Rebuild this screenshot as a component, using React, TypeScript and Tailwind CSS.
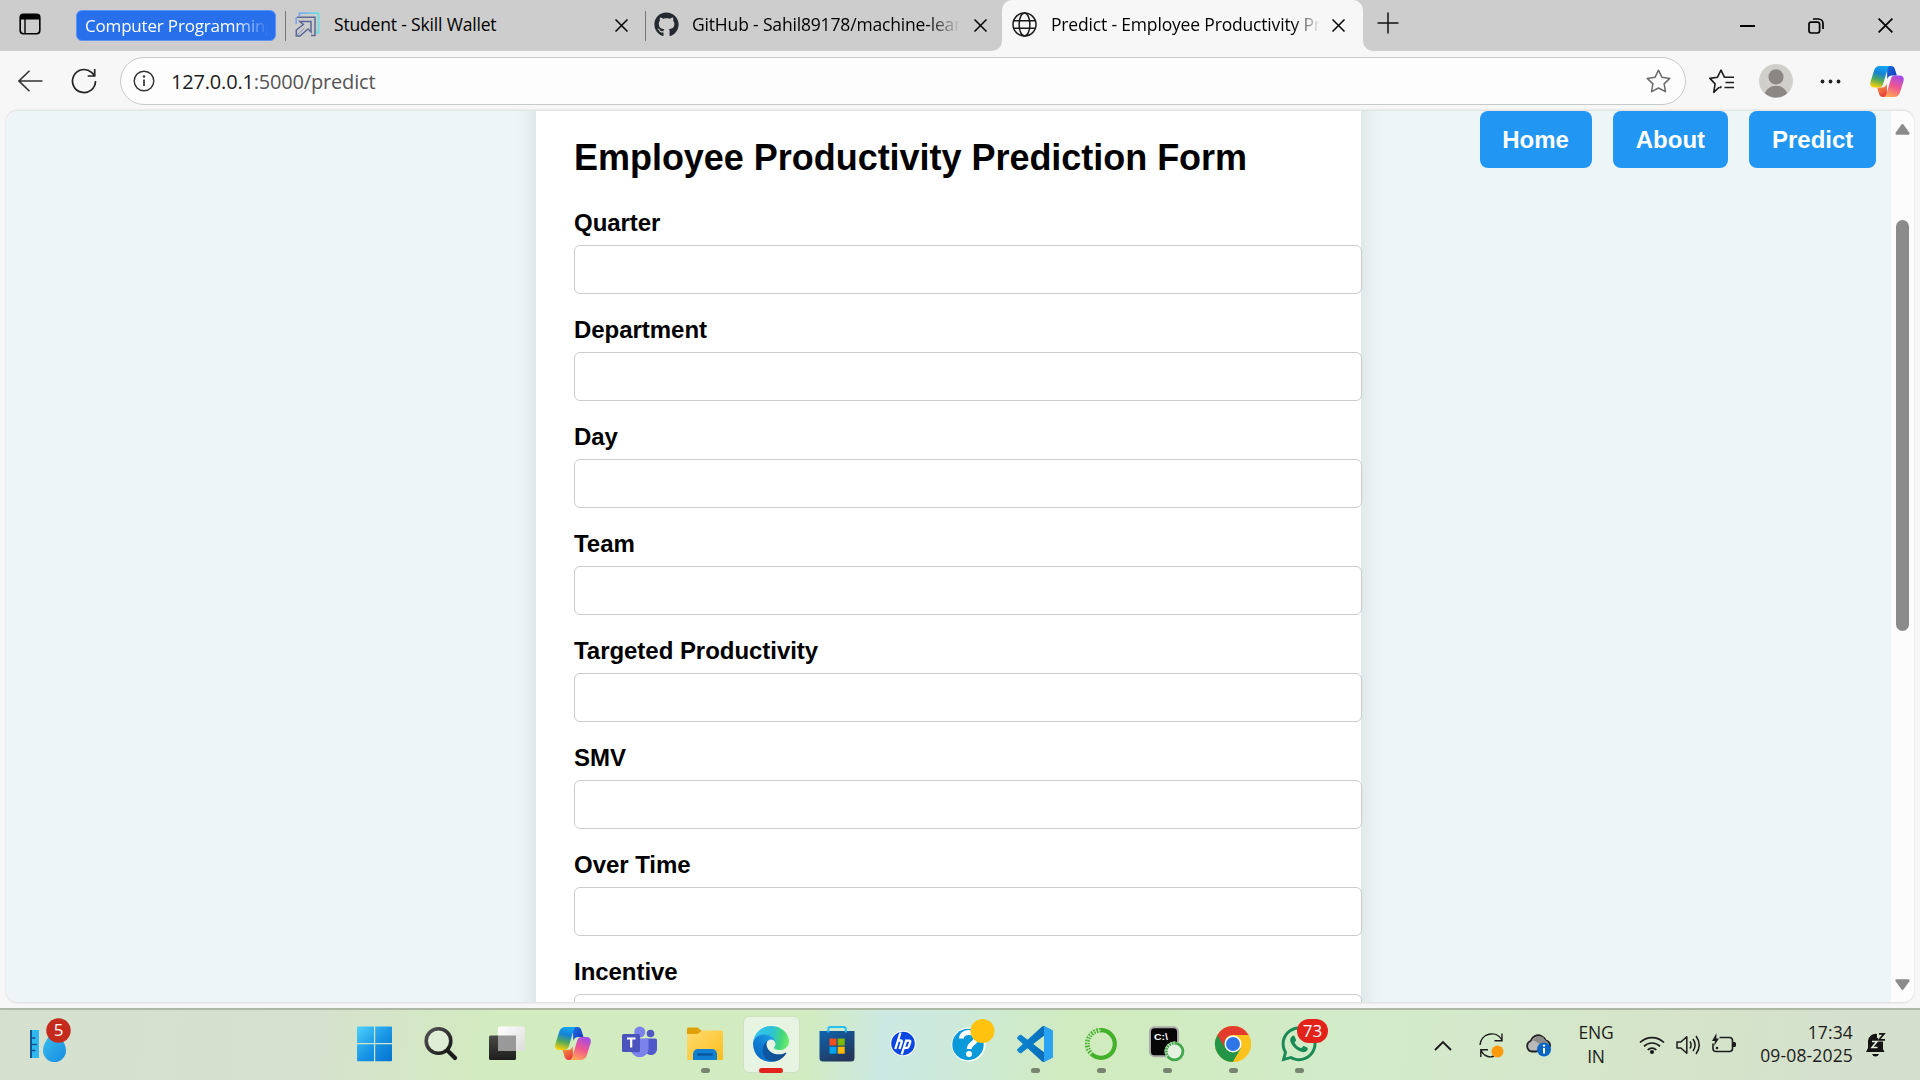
import React from "react";
import { FaGithub, FaWhatsapp } from "react-icons/fa";

const fields = [
  "Quarter",
  "Department",
  "Day",
  "Team",
  "Targeted Productivity",
  "SMV",
  "Over Time",
  "Incentive",
];

function CloseX({ className = "size-[13px]" }: { className?: string }) {
  return (
    <svg viewBox="0 0 13 13" className={className} fill="none" stroke="#000" strokeWidth="1.5">
      <path d="M.5 .5l12 12M12.5 .5l-12 12" />
    </svg>
  );
}

function WorkspaceIcon() {
  return (
    <svg width="22" height="22" viewBox="0 0 22 22">
      <rect x="1.2" y="1.2" width="19.6" height="19.6" rx="3.2" fill="none" stroke="#000" strokeWidth="1.6" />
      <path d="M1 6.5V4a3 3 0 0 1 3-3h14a3 3 0 0 1 3 3v2.5z" />
      <path d="M6 6v15" stroke="#000" strokeWidth="1.4" />
    </svg>
  );
}

function SkillIcon() {
  return (
    <svg width="25" height="25" viewBox="0 0 25 25" fill="none">
      <defs>
        <linearGradient id="sk" x1="0" y1="0" x2="1" y2="0">
          <stop offset="0" stopColor="#7fa6f0" />
          <stop offset="1" stopColor="#66dfe2" />
        </linearGradient>
      </defs>
      <path d="M4.500 4V1.200H23.500V20.500H20.500" stroke="url(#sk)" strokeWidth="1.800" />
      <path d="M1.200 12V5" stroke="#7fa6f0" strokeWidth="1.600" />
      <path d="M2 5.200H20V23.500H16" stroke="#5f6a90" strokeWidth="1.500" />
      <path d="M5 9.500h11V20l-3-3-4 3.500L5 24H1.300v-6l7-5.500z" stroke="#5a6592" strokeWidth="1.500" />
      <path d="M1.500 23.500l8-7.500" stroke="#7b8cc0" strokeWidth="1" />
    </svg>
  );
}

function GlobeIcon() {
  return (
    <svg width="25" height="25" viewBox="0 0 25 25" fill="none" stroke="#1b1b1b" strokeWidth="1.500">
      <circle cx="12.500" cy="12.500" r="11.500" />
      <ellipse cx="12.500" cy="12.500" rx="5.400" ry="11.500" />
      <path d="M2 8.700h21M2 16.300h21" />
    </svg>
  );
}

function CopilotIcon({ id, className }: { id: string; className: string }) {
  return (
    <svg viewBox="0 0 36 33" className={className}>
      <defs>
        <linearGradient id={id + "a"} x1="0.600" y1="0" x2="0.350" y2="1">
          <stop offset="0" stopColor="#12a5f0" />
          <stop offset=".35" stopColor="#1583d6" />
          <stop offset=".65" stopColor="#4fa95c" />
          <stop offset="1" stopColor="#f5cf0a" />
        </linearGradient>
        <linearGradient id={id + "b"} x1="0.700" y1="0" x2="0.300" y2="1">
          <stop offset="0" stopColor="#a34be8" />
          <stop offset=".5" stopColor="#f0568f" />
          <stop offset="1" stopColor="#ffa955" />
        </linearGradient>
        <linearGradient id={id + "c"} x1="0" y1="0" x2="1" y2="1">
          <stop offset="0" stopColor="#1c6fe0" />
          <stop offset="1" stopColor="#1232b8" />
        </linearGradient>
        <linearGradient id={id + "d"} x1="0" y1="0" x2="0.500" y2="1">
          <stop offset="0" stopColor="#f9a63a" />
          <stop offset="1" stopColor="#e8403f" />
        </linearGradient>
      </defs>
      <path d="M18 0h4.500c2 0 3.200 1.200 3.800 3l2.200 7h-5c-3 0-4.500 1.500-5.300 4z" fill={`url(#${id}c)`} />
      <path d="M18 33h-4.500c-2 0-3.200-1.200-3.800-3l-2.200-7h5c3 0 4.500-1.500 5.300-4z" fill={`url(#${id}d)`} />
      <path d="M10.500 0H22c-2 0-2.800 1.500-3.600 4l-4.600 15.500c-.8 2.400-2.300 3.500-4.600 3.500H4.500C1 23-.5 20.500.400 17L4.300 4.500C5.200 1.600 7.500 0 10.500 0z" fill={`url(#${id}a)`} />
      <path d="M25.500 33H14c2 0 2.800-1.500 3.600-4l4.600-15.500c.8-2.400 2.300-3.500 4.600-3.500h4.700c3.500 0 5 2.500 4.100 6l-3.900 12.500c-.9 2.900-3.200 4.500-6.200 4.500z" fill={`url(#${id}b)`} />
    </svg>
  );
}

function TabStrip() {
  return (
    <div className="flex h-[51px] w-full items-start bg-[#cdcdcd] text-[17.5px] leading-[24px] text-black">
      <div className="ml-[19px] mt-[13px] w-[22px]"><WorkspaceIcon /></div>
      <div className="ml-[35px] mt-[10px] flex h-[31px] w-[200px] items-center rounded-[6px] border border-[#5b95f3] bg-[#2870eb] pl-[8px]">
        <span className="w-[183px] overflow-hidden whitespace-nowrap text-[17px] tracking-[-0.18px] text-white [mask-image:linear-gradient(90deg,#000_82%,transparent)]">
          Computer Programming
        </span>
      </div>
      <div className="ml-[9px] mt-[11px] h-[30px] w-px bg-[#777]" />
      <div className="ml-[9px] flex h-[49px] w-[350px] items-center">
        <SkillIcon />
        <span className="-mt-[2px] ml-[14px] w-[281px] whitespace-nowrap tracking-[-0.170px]">Student - Skill Wallet</span>
        <CloseX className="mt-px size-[13px]" />
      </div>
      <div className="mt-[11px] h-[30px] w-px bg-[#777]" />
      <div className="ml-[8px] flex h-[49px] w-[348px] items-center">
        <FaGithub size={25} color="#24292f" />
        <span className="-mt-[2px] ml-[13px] w-[268px] overflow-hidden whitespace-nowrap tracking-[-0.170px] [mask-image:linear-gradient(90deg,#000_88%,transparent)]">
          GitHub - Sahil89178/machine-learning
        </span>
        <CloseX className="ml-[14px] mt-px size-[13px]" />
      </div>
      <div className="-ml-[10px] flex h-[51px] w-[10px] bg-[#f7f7f7]"><div className="h-full w-full rounded-br-[10px] bg-[#cdcdcd]" /></div>
      <div className="flex h-[51px] w-[361px] items-start rounded-t-[10px] bg-[#f7f7f7]">
        <div className="flex h-[49px] items-center pl-[10px]">
          <GlobeIcon />
          <span className="-mt-[2px] ml-[14px] w-[269px] overflow-hidden whitespace-nowrap tracking-[-0.170px] [mask-image:linear-gradient(90deg,#000_90%,transparent)]">
            Predict - Employee Productivity Prediction
          </span>
          <CloseX className="ml-[12px] mt-px size-[13px]" />
        </div>
      </div>
      <div className="flex h-[51px] w-[10px] bg-[#f7f7f7]"><div className="h-full w-full rounded-bl-[10px] bg-[#cdcdcd]" /></div>
      <svg width="22" height="22" viewBox="0 0 22 22" className="ml-[4px] mt-[12px]" stroke="#111" strokeWidth="1.500"><path d="M11 .5v21M.5 11h21" /></svg>
      <div className="ml-auto mr-[27px] flex h-[51px] items-center">
        <div className="h-[2px] w-[15px] bg-black" />
        <svg width="16" height="16" viewBox="0 0 16 16" fill="none" stroke="#000" strokeWidth="1.700" className="ml-[53px]">
          <rect x="1" y="4.200" width="10.600" height="10.800" rx="2.200" />
          <path d="M5 1h5.500A4.500 4.500 0 0 1 15 5.500V11" />
        </svg>
        <CloseX className="ml-[54px] size-[15px]" />
      </div>
    </div>
  );
}

function Toolbar() {
  return (
    <div className="flex h-[59px] w-full items-center bg-[#f7f7f7]">
      <svg width="25" height="22" viewBox="0 0 25 22" className="ml-[18px]" fill="none" stroke="#333" strokeWidth="1.600"><path d="M24.500 11H1M11.500 .7L1 11l10.500 10.300" /></svg>
      <svg width="26" height="26" viewBox="0 0 26 26" className="ml-[28px]" fill="none" stroke="#222" strokeWidth="1.700">
        <path d="M24.500 13A11.500 11.500 0 1 1 20.500 4.300l3 3M23.700 1v7h-7" />
      </svg>
      <div className="ml-[23px] flex h-[48px] w-[1566px] items-center rounded-full border border-[#c9c9c9] bg-[#fdfdfd]">
        <svg width="22" height="22" viewBox="0 0 22 22" className="ml-[12px]" fill="none" stroke="#333" strokeWidth="1.400">
          <circle cx="11" cy="11" r="9.800" />
          <path d="M11 9.500v6.500" strokeWidth="1.700" />
          <circle cx="11" cy="6.500" r="1.200" fill="#333" stroke="none" />
        </svg>
        <span className="mt-[2px] ml-[16px] whitespace-nowrap text-[20px] leading-[28px] tracking-[-0.18px] text-[#1c1c1c]">
          127.0.0.1<span className="text-[#555]">:5000/predict</span>
        </span>
        <svg width="25" height="25" viewBox="0 0 25 25" className="mt-px ml-auto mr-[14px]" fill="none" stroke="#6b6b6b" strokeWidth="1.500" strokeLinejoin="round">
          <path d="M12.500 1.200l3.500 7.100 7.800 1.100-5.700 5.500 1.400 7.800-7-3.700-7 3.700 1.400-7.800-5.700-5.500L9 8.300z" />
        </svg>
      </div>
      <svg width="26" height="25" viewBox="0 0 26 25" className="mt-px ml-[23px]" fill="none" stroke="#1d1d1d" strokeWidth="1.600" strokeLinejoin="round">
        <path d="M10 18.300l-5.300 5 1.400-8.400L.900 9.400l7.500-1.100L12 1.200l3.500 7.100H25M16.500 13.500H25M15.500 18.500H25" />
        <path d="M10.500 19l2-1.500" />
      </svg>
      <svg width="34" height="34" viewBox="0 0 34 34" className="mt-px ml-[24px]">
        <defs><clipPath id="av"><circle cx="17" cy="17" r="16.500" /></clipPath></defs>
        <circle cx="17" cy="17" r="17" fill="#d1cfcb" />
        <g clipPath="url(#av)" fill="#8a8784"><circle cx="17" cy="12.800" r="7.600" /><path d="M4.500 34c1-7.500 6-12.300 12.500-12.300S28.500 26.500 29.500 34z" /></g>
      </svg>
      <svg width="21" height="5" viewBox="0 0 21 5" className="mt-px ml-[27px]" fill="#222"><circle cx="2.500" cy="2.500" r="1.900" /><circle cx="10.500" cy="2.500" r="1.900" /><circle cx="18.500" cy="2.500" r="1.900" /></svg>
      <CopilotIcon id="tc" className="mt-px ml-[29px] h-[31px] w-[34px]" />
    </div>
  );
}

function NavButton({ children }: { children: React.ReactNode }) {
  return (
    <a className="flex h-[57px] items-center rounded-[8px] bg-[#2196f3] px-[22.700px] text-[24px] font-bold text-white">{children}</a>
  );
}

function Page() {
  return (
    <div className="mx-[6px] flex h-[893px] overflow-hidden rounded-[12px] border-t border-b border-[#e4e4e4] bg-[#fcfcfc] font-['Liberation_Sans',Arial,sans-serif] shadow-[0_0_2px_rgba(0,0,0,0.15)]">
      <main className="grid h-full flex-1 grid-cols-[530px_825px_530px] overflow-hidden bg-[#edf5f7]">
        <div />
        <form className="-mt-[40px] h-[980px] bg-white pt-[66px] pl-[38px] shadow-[0_0_22px_rgba(0,0,0,0.11)]">
          <h2 className="mb-[30px] text-[36px] leading-[42px] font-bold tracking-[-0.03px] text-black">Employee Productivity Prediction Form</h2>
          {fields.map((f) => (
            <div key={f} className="mb-[22px]">
              <label className="block text-[24px] leading-[27px] font-bold tracking-[-0.04px] text-black">{f}</label>
              <input className="mt-[9px] block h-[49px] w-[788px] rounded-[6px] border border-[#ccc] bg-white" />
            </div>
          ))}
        </form>
        <nav className="flex items-start justify-end gap-[21.500px] pr-[15px]">
          <NavButton>Home</NavButton>
          <NavButton>About</NavButton>
          <NavButton>Predict</NavButton>
        </nav>
      </main>
      <div className="flex w-[23px] flex-col items-center bg-[#fcfcfc] pt-[13px] pb-[12px]">
        <svg width="15" height="11" viewBox="0 0 15 11" fill="#8b8b8b"><path d="M6.300 .8q1.200-1.400 2.400 0l5.700 8q.6 1.700-1 1.900H1.600q-1.600-.2-1-1.900z" /></svg>
        <div className="mt-[85px] h-[411px] w-[13px] rounded-full bg-[#8b8b8b]" />
        <svg width="15" height="11" viewBox="0 0 15 11" fill="#8b8b8b" className="mt-auto"><path d="M6.300 10.200q1.200 1.400 2.400 0l5.700-8q.6-1.700-1-1.900H1.600q-1.600 .2-1 1.900z" /></svg>
      </div>
    </div>
  );
}

function Cell({ children, state }: { children: React.ReactNode; state?: "run" | "active" }) {
  return (
    <div className="flex h-[70px] w-[66px] flex-col items-center pt-[6px]">
      <div
        className={
          state === "active"
            ? "flex h-[57px] w-[57px] items-start justify-center rounded-[6px] border border-[#cfe0c4] bg-[#e8f4e2] pt-[9px]"
            : "flex h-[57px] w-[57px] items-start justify-center pt-[10px]"
        }
      >
        {children}
      </div>
      {state === "run" && <div className="-mt-[5px] h-[5px] w-[9px] rounded-full bg-[#77846f]" />}
      {state === "active" && <div className="-mt-[5px] h-[5px] w-[24px] rounded-full bg-[#e3221b]" />}
    </div>
  );
}

const S = { width: 36, height: 36, viewBox: "0 0 36 36", className: "shrink-0 overflow-visible" };

function WindowsIcon() {
  return (
    <svg {...S}>
      <defs><linearGradient id="wn" x1="0" y1="0" x2="36" y2="36" gradientUnits="userSpaceOnUse"><stop offset="0" stopColor="#4fd3fb" /><stop offset=".5" stopColor="#1a97e6" /><stop offset="1" stopColor="#0270ce" /></linearGradient></defs>
      <path fill="url(#wn)" d="M1 .5h16v16.500H0V1.500A1 1 0 0 1 1 .5zM18.200 .5h15.800A1 1 0 0 1 35 1.500v15.500H18.200zM0 18.200H17V35.300H1a1 1 0 0 1-1-1zM18.200 18.200H35v16.100a1 1 0 0 1-1 1H18.200z" />
    </svg>
  );
}

function SearchIcon() {
  return (
    <svg {...S}>
      <defs><linearGradient id="sr" x1="0" y1="0" x2="1" y2="1"><stop offset="0" stopColor="#555" /><stop offset="1" stopColor="#151515" /></linearGradient></defs>
      <circle cx="15.500" cy="15" r="12.300" fill="#e8f0e2" fillOpacity=".6" stroke="url(#sr)" strokeWidth="3.600" />
      <path d="M24.500 24.500l7.500 7.500" stroke="#1c1c1c" strokeWidth="4.200" strokeLinecap="round" />
    </svg>
  );
}

function TaskViewIcon() {
  return (
    <svg {...S}>
      <defs>
        <linearGradient id="tva" x1="0" y1="0" x2="0" y2="1"><stop offset="0" stopColor="#4a4a46" /><stop offset="1" stopColor="#1d1d1d" /></linearGradient>
        <linearGradient id="tvb" x1="0" y1="0" x2="1" y2="1"><stop offset="0" stopColor="#fff" /><stop offset="1" stopColor="#dcdcdc" /></linearGradient>
      </defs>
      <rect x="0" y="9.500" width="27" height="24.500" rx="1.500" fill="url(#tva)" />
      <rect x="9" y=".5" width="27" height="24.500" rx="1.500" fill="url(#tvb)" />
      <path d="M9 9.500h18V25H10.500A1.500 1.500 0 0 1 9 23.500z" fill="#999" />
    </svg>
  );
}

function TeamsIcon() {
  return (
    <svg {...S}>
      <circle cx="29.500" cy="7.500" r="3.800" fill="#4f57c0" />
      <path d="M24 12.500h10.500a1.500 1.500 0 0 1 1.500 1.500v8a6 6 0 0 1-12 2z" fill="#5059c9" />
      <circle cx="18.800" cy="6" r="5.500" fill="#7b83eb" />
      <path d="M11 12.500h15a1.500 1.500 0 0 1 1.500 1.500v9.500a8.800 8.800 0 0 1-17.500 0z" fill="#7b83eb" />
      <path d="M11 12.500h8v14h-8.500z" fill="#5059c9" opacity=".5" />
      <rect x="1" y="8" width="18" height="18" rx="1.600" fill="#4b53bc" />
      <path d="M6 12.500h8.500M10.200 12.500v9" stroke="#fff" strokeWidth="2.200" />
    </svg>
  );
}

function FolderIcon() {
  return (
    <svg {...S}>
      <defs><linearGradient id="fo" x1="0" y1="0" x2="1" y2="1"><stop offset="0" stopColor="#ffdc70" /><stop offset="1" stopColor="#fbbd1c" /></linearGradient></defs>
      <path d="M0 3a1.500 1.500 0 0 1 1.500-1.500h9L15 5v5H0z" fill="#e0a008" />
      <path d="M0 8h10.500L15 4.500h19.500A1.500 1.500 0 0 1 36 6v26.500a1.500 1.500 0 0 1-1.500 1.500h-33A1.500 1.500 0 0 1 0 32.500z" fill="url(#fo)" />
      <path d="M6 34v-6a5 5 0 0 1 5-5h14a5 5 0 0 1 5 5v6z" fill="#0f7fd2" />
      <path d="M11 28.500h14" stroke="#0a4f92" strokeWidth="1.800" strokeLinecap="round" />
    </svg>
  );
}

function EdgeIcon() {
  return (
    <svg {...S} viewBox="0 0 256 256">
      <defs>
        <linearGradient id="e1" x1="63" y1="177" x2="241" y2="177" gradientUnits="userSpaceOnUse"><stop offset="0" stopColor="#0c59a4" /><stop offset="1" stopColor="#114a8b" /></linearGradient>
        <linearGradient id="e2" x1="157" y1="100" x2="46" y2="221" gradientUnits="userSpaceOnUse"><stop offset="0" stopColor="#1b9de2" /><stop offset=".5" stopColor="#0f80d7" /><stop offset="1" stopColor="#0a6cc4" /></linearGradient>
        <linearGradient id="e3" x1="10" y1="60" x2="245" y2="110" gradientUnits="userSpaceOnUse"><stop offset="0" stopColor="#35c1f1" /><stop offset=".5" stopColor="#2cc3d5" /><stop offset=".8" stopColor="#44d67b" /><stop offset="1" stopColor="#66eb6e" /></linearGradient>
      </defs>
      <path fill="url(#e1)" d="M231 190.500c-3.400 1.800-6.900 3.400-10.500 4.700a101.700 101.700 0 0 1-35.900 6.400c-47.300 0-88.500-32.500-88.500-74.300a31.500 31.500 0 0 1 16.400-27.300c-42.800 1.800-53.800 46.400-53.800 72.500 0 74 68.100 81.400 82.800 81.400 7.900 0 19.800-2.300 27-4.600l1.300-.4a128.300 128.300 0 0 0 66.600-52.800 4 4 0 0 0-5.400-5.600z" />
      <path fill="url(#e2)" d="M105.700 241.400a79.200 79.200 0 0 1-22.700-21.300 80.700 80.700 0 0 1 29.500-120c3.200-1.500 8.500-4.100 15.600-4a32.400 32.400 0 0 1 25.700 13 31.900 31.900 0 0 1 6.300 18.700c0-.2 24.500-79.600-80-79.600-43.900 0-80 41.600-80 78.200a130.200 130.200 0 0 0 12.100 56 128 128 0 0 0 156.400 67 75.500 75.500 0 0 1-62.800-8z" />
      <path fill="url(#e3)" d="M152.300 148.900c-.9 1-3.400 2.500-3.400 5.600 0 2.600 1.700 5.200 4.800 7.300 14.300 10 41.400 8.600 41.500 8.600a59.600 59.600 0 0 0 30.300-8.300 61.400 61.400 0 0 0 30.400-52.900c.3-22.400-8-37.300-11.300-43.900C223.300 23.700 177.700 0 128 0A128 128 0 0 0 0 126.200c.5-36.500 36.800-66 80-66 3.500 0 23.500.3 42 10a72.600 72.600 0 0 1 30.900 29.300c6.100 10.600 7.200 24.100 7.200 29.500s-2.700 13.300-7.800 19.900z" />
    </svg>
  );
}

function StoreIcon() {
  return (
    <svg {...S}>
      <defs><linearGradient id="st" x1="0" y1="0" x2="0.600" y2="1"><stop offset="0" stopColor="#0f64b0" /><stop offset="1" stopColor="#23375c" /></linearGradient></defs>
      <path d="M9.300 6.500V3a2 2 0 0 1 2-2h13.500a2 2 0 0 1 2 2v3.500" fill="none" stroke="#27c0f2" strokeWidth="2" />
      <path d="M.5 5h35v27a3.500 3.500 0 0 1-3.500 3.500H4A3.500 3.500 0 0 1 .5 32z" fill="url(#st)" />
      <path d="M9.300 4.500v2M26.800 4.500v2" stroke="#27c0f2" strokeWidth="2" />
      <path d="M10.500 12.500h7v7h-7z" fill="#f25022" /><path d="M18.700 12.500h7v7h-7z" fill="#7fba00" />
      <path d="M10.500 20.700h7v7h-7z" fill="#00a4ef" /><path d="M18.700 20.700h7v7h-7z" fill="#ffb900" />
    </svg>
  );
}

function HpIcon() {
  return (
    <svg {...S}>
      <circle cx="18" cy="17.500" r="12.800" fill="#fff" />
      <circle cx="18" cy="17.500" r="11.800" fill="#0a47e0" />
      <g fill="none" stroke="#fff" strokeWidth="2.300">
        <path d="M15.500 6.500l-5.200 16.500M13 14.500h2.700q1.500 0 1 1.600L14.500 23" />
        <path d="M21.500 13.500L16.700 28.500M20.700 14.600h3.500q1.500 0 1 1.600l-1.500 4.400q-.5 1.300-1.900 1.300h-2.600" />
      </g>
    </svg>
  );
}

function HelpIcon() {
  return (
    <svg {...S}>
      <circle cx="17.500" cy="18.500" r="17" fill="#fff" />
      <circle cx="17" cy="18.500" r="15.700" fill="#0a9ada" />
      <path d="M10.500 12.500c0-8 14.500-8 14.500 0 0 5-6.800 5-6.800 10.500" fill="none" stroke="#fff" strokeWidth="4.800" />
      <circle cx="18" cy="28" r="3" fill="#fff" />
      <circle cx="31.500" cy="5" r="12" fill="#ffc20e" />
    </svg>
  );
}

function VsCodeIcon() {
  return (
    <svg {...S} viewBox="0 0 24 24">
      <defs><linearGradient id="vs" x1="0" y1="0" x2="1" y2="0"><stop offset="0" stopColor="#0b86d2" /><stop offset="1" stopColor="#0966ae" /></linearGradient></defs>
      <path fill="url(#vs)" d="M23.150 2.587L18.210.21a1.494 1.494 0 0 0-1.705.29l-9.460 8.630-4.120-3.128a.999.999 0 0 0-1.276.057L.327 7.261A1 1 0 0 0 .326 8.740L3.899 12 .326 15.260a1 1 0 0 0 .001 1.479L1.650 17.940a.999.999 0 0 0 1.276.057l4.120-3.128 9.460 8.630a1.492 1.492 0 0 0 1.704.290l4.942-2.377A1.500 1.500 0 0 0 24 20.060V3.939a1.500 1.500 0 0 0-.850-1.352zm-5.146 14.861L10.826 12l7.178-5.448v10.896z" />
      <path fill="#2aa3f2" d="M18 .150l.210.060 4.940 2.377A1.500 1.500 0 0 1 24 3.939V20.060a1.500 1.500 0 0 1-.850 1.352l-4.940 2.377L18 23.850z" />
    </svg>
  );
}

function AnacondaIcon() {
  return (
    <svg {...S}>
      <circle cx="18" cy="18" r="13.800" fill="none" stroke="#43b02a" strokeWidth="4.200" />
      <path d="M18 4.200A13.800 13.800 0 0 0 8.300 27.800" fill="none" stroke="#d3ebc3" strokeWidth="4.600" />
      <path d="M18 4.200A13.800 13.800 0 0 0 8.300 27.800" fill="none" stroke="#43b02a" strokeWidth="4.400" strokeDasharray="1.600 1.300" />
      <path d="M18 4.200A13.800 13.800 0 0 0 8.300 27.800" fill="none" stroke="#b9e2a6" strokeWidth="1" strokeDasharray="3 2" />
    </svg>
  );
}

function CmdIcon() {
  return (
    <svg {...S}>
      <rect x="1" y="1.200" width="28" height="29" rx="4.500" fill="#070707" stroke="#a9aaa9" strokeWidth="2" />
      <text x="5" y="13.500" fill="#fff" fontSize="9.500" fontWeight="700" fontFamily="Liberation Sans, sans-serif" textLength="14" lengthAdjust="spacingAndGlyphs">C:\</text>
      <circle cx="25.500" cy="25.500" r="10" fill="#d9edd0" />
      <circle cx="25.500" cy="25.500" r="8.400" fill="#e6f2e0" stroke="#43a84c" strokeWidth="2.800" />
      <path d="M25.500 17.100a8.400 8.400 0 0 0-6 14.300" fill="none" stroke="#d9edd0" strokeWidth="3" strokeDasharray="1 1.800" />
    </svg>
  );
}

function ChromeIcon() {
  return (
    <svg {...S}>
      <circle cx="18" cy="18" r="18" fill="#fcc31e" />
      <path d="M2.400 9A18 18 0 0 0 18 36l7.800-13.500L18 18z" fill="#249447" />
      <path d="M25.800 22.500L18 36A18 18 0 0 0 33.600 9H18z" fill="#fcc31e" />
      <path d="M2.400 9A18 18 0 0 1 33.600 9H18a9 9 0 0 0-7.800 13.500z" fill="#e33b2e" />
      <circle cx="18" cy="18" r="8.500" fill="#fff" />
      <circle cx="18" cy="18" r="7" fill="#2f76e8" />
    </svg>
  );
}

function WeatherIcon() {
  return (
    <svg width="44" height="48" viewBox="0 0 44 48">
      <defs><linearGradient id="wd" x1="0" y1="0" x2="0.800" y2="1"><stop offset="0" stopColor="#3cc6f2" /><stop offset="1" stopColor="#1990e2" /></linearGradient></defs>
      <path d="M2 12h9v28H2z" fill="#2fb7ef" /><path d="M2 12h2v28H2z" fill="#17558f" />
      <path d="M4 20h3.500M4 26.500h5M4 32.500h3.500" stroke="#17558f" strokeWidth="1.600" />
      <path d="M26.500 10c4 7 11.500 14.500 11.500 22.500a11.500 11.500 0 0 1-23 0C15 24.500 22.500 17 26.500 10z" fill="url(#wd)" />
      <circle cx="30.500" cy="12.500" r="12.200" fill="#c42b1c" />
      <text x="30.500" y="18.400" textAnchor="middle" fill="#fff" fontSize="17" fontFamily="Open Sans, sans-serif">5</text>
    </svg>
  );
}

function Tray() {
  return (
    <>
      <svg width="18" height="11" viewBox="0 0 18 11" className="ml-[102px] shrink-0" fill="none" stroke="#1c1c1c" strokeWidth="1.900"><path d="M1 10l8-8 8 8" /></svg>
      <svg width="25" height="26" viewBox="0 0 25 26" className="ml-[27px] shrink-0" fill="none" stroke="#1c1c1c" strokeWidth="1.400">
        <path d="M1 13C1.500 1.500 17-2.500 23 8M23 1.500V8.800h-7.500M9 17.800H1.800V25M2 18.500c3 6 9 7.500 13 5.500" />
        <circle cx="18.500" cy="19.500" r="6" fill="#fd9a0c" stroke="none" />
      </svg>
      <svg width="26" height="24" viewBox="0 0 26 24" className="ml-[22px] shrink-0">
        <path d="M7 18.500H6A5.500 5.500 0 0 1 4.500 8C6 3.500 11 1 15.500 3c2 .8 3.600 2.500 4.300 4.500C23 8 24.500 11 24 13.500L10 18.500z" fill="#bababa" stroke="#222" strokeWidth="1.800" />
        <path d="M5.500 7.800C8.500 7 10 9 14 11l8 3V9l-3-2-2-3-5-1z" fill="#8b8b8b" />
        <circle cx="18" cy="16.500" r="7" fill="#0a66c2" />
        <path d="M18 15v5.500" stroke="#fff" strokeWidth="2" /><circle cx="18" cy="12.600" r="1.200" fill="#fff" />
      </svg>
      <div className="-mt-px ml-[18px] w-[52px] shrink-0 text-center text-[17.5px] leading-[23.500px] tracking-[-0.2px] text-[#1c1c1c]">
        ENG<br />IN
      </div>
      <svg width="26" height="20" viewBox="0 0 26 20" className="ml-[17px] shrink-0" fill="none" stroke="#1c1c1c" strokeWidth="1.700">
        <path d="M1 7.500a17 17 0 0 1 24 0M5 11.300a11.300 11.300 0 0 1 16 0M8.700 15a6 6 0 0 1 8.600 0" />
        <circle cx="13" cy="17" r="2.100" fill="#1c1c1c" stroke="none" />
      </svg>
      <svg width="25" height="22" viewBox="0 0 25 22" className="ml-[11px] shrink-0" fill="none" stroke="#1c1c1c" strokeWidth="1.500">
        <path d="M1 8v6h3.800l6 5.300V2.700L4.800 8z" strokeLinejoin="round" />
        <path d="M14 7.500q2.200 3.500 0 7M17 5q4.200 6 0 12M20 2q6.500 9 0 18" />
      </svg>
      <svg width="26" height="22" viewBox="0 0 26 22" className="-mt-[3px] ml-[10px] shrink-0" fill="none" stroke="#1c1c1c" strokeWidth="1.600">
        <path d="M8.500 4.500h10A3 3 0 0 1 21.500 7.500v8a3 3 0 0 1-3 3H5a3 3 0 0 1-3-3V10.500" />
        <path d="M22 9h1.500a1.500 1.500 0 0 1 1.500 1.500v2a1.500 1.500 0 0 1-1.500 1.500H22z" fill="#1c1c1c" stroke="none" />
        <path d="M5.500 0L1 8h3l-1 5 5-7.500H5.300z" fill="#1c1c1c" stroke="none" />
        <circle cx="6" cy="15" r="1.300" fill="#1c1c1c" stroke="none" />
      </svg>
      <div className="-mt-[2px] ml-[10px] w-[106px] shrink-0 text-right text-[17.5px] leading-[23.500px] tracking-[0.15px] whitespace-nowrap text-[#1c1c1c]">
        17:34<br />09-08-2025
      </div>
      <svg width="22" height="25" viewBox="0 0 22 25" className="-mt-[2px] ml-[12px] shrink-0">
        <path d="M3 9a7.500 7.500 0 0 1 9-7v4h6v11l1.500 3H1l2-4z" fill="#141414" />
        <path d="M7 22h7q-1 2.500-3.500 2.500T7 22z" fill="#141414" />
        <path d="M13 0h8v9.500h-8z" fill="#d5e1cc" />
        <path d="M14 1.800h5l-5 6H20" fill="none" stroke="#141414" strokeWidth="1.700" />
        <path d="M7 9.500h5l-5 6h5.500" fill="none" stroke="#e6efe0" strokeWidth="1.600" />
      </svg>
    </>
  );
}

function Taskbar() {
  return (
    <div className="flex h-[72px] w-full items-center border-t-2 border-[#adb8a5] bg-[linear-gradient(97deg,#d5e0ce_0%,#d6e2cd_17%,#d2ebbf_26%,#d2ebc0_42%,#cbe9e2_46%,#cce9dc_49%,#d0ebbd_56%,#d3ebcb_72%,#d5e5c9_84%,#d4dfce_100%)]">
      <div className="ml-[28px] -mt-[6px] w-[44px]"><WeatherIcon /></div>
      <div className="ml-[270px] flex">
        <Cell><WindowsIcon /></Cell>
        <Cell><SearchIcon /></Cell>
        <Cell><TaskViewIcon /></Cell>
        <Cell><CopilotIcon id="bc" className="mt-px h-[33px] w-[36px]" /></Cell>
        <Cell><TeamsIcon /></Cell>
        <Cell state="run"><FolderIcon /></Cell>
        <Cell state="active"><EdgeIcon /></Cell>
        <Cell><StoreIcon /></Cell>
        <Cell><HpIcon /></Cell>
        <Cell><HelpIcon /></Cell>
        <Cell state="run"><VsCodeIcon /></Cell>
        <Cell state="run"><AnacondaIcon /></Cell>
        <Cell state="run"><CmdIcon /></Cell>
        <Cell state="run"><ChromeIcon /></Cell>
        <Cell state="run">
          <div className="relative">
            <FaWhatsapp size={40} color="#1a8a55" className="-mt-[2px]" />
            <span className="absolute -top-[7px] left-[18px] flex h-[24px] w-[31px] items-center justify-center rounded-full bg-[#e3221b] text-[17px] leading-[24px] text-white">73</span>
          </div>
        </Cell>
      </div>
      <Tray />
    </div>
  );
}

export default function App() {
  return (
    <div className="flex h-[1080px] w-[1920px] flex-col overflow-hidden bg-[#f7f7f7] font-['Open_Sans','Noto_Sans',sans-serif]">
      <TabStrip />
      <Toolbar />
      <Page />
      <div className="h-[5px]" />
      <Taskbar />
    </div>
  );
}
